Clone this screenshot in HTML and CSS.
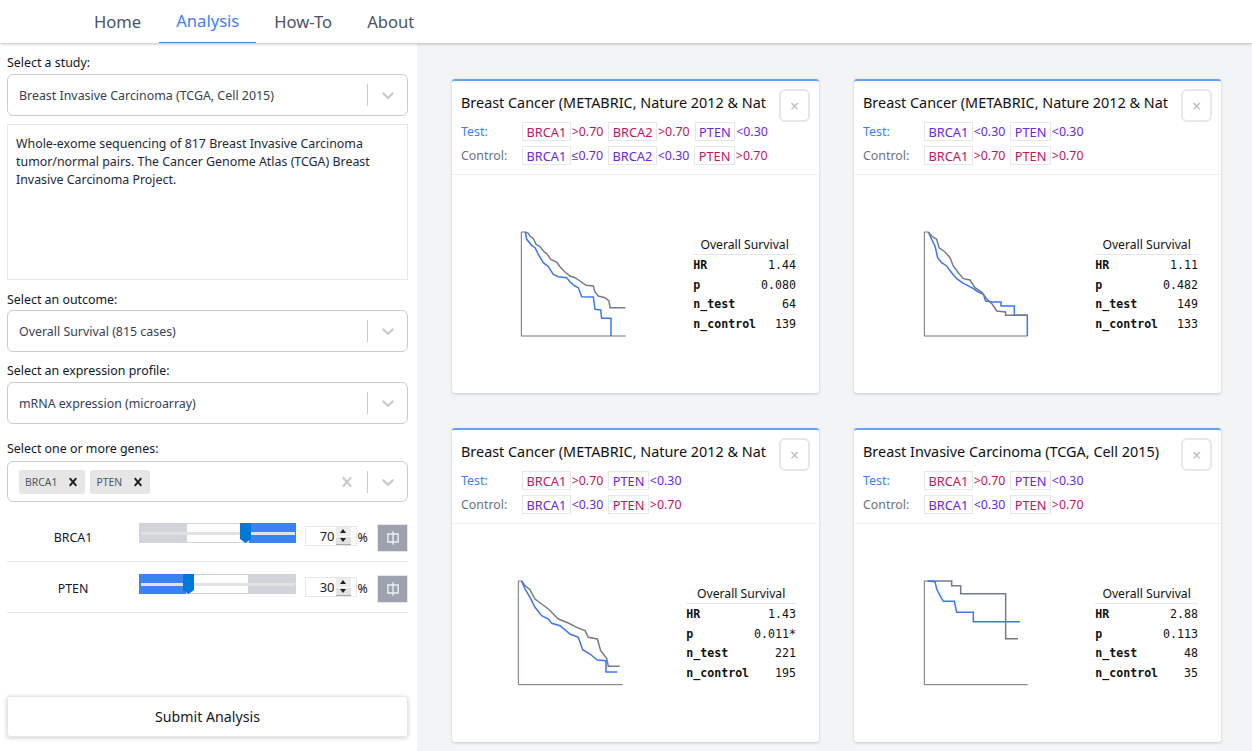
FILE: index.html
```html
<!DOCTYPE html>
<html lang="en">
<head>
  <meta charset="UTF-8" />
  <title>Survival Analysis</title>
  <link rel="stylesheet" href="styles.css">
</head>
<body>
  <svg class="defs" aria-hidden="true">
    <symbol id="chevron" viewBox="0 0 20 20"><path d="M4.516 7.548c0.436-0.446 1.043-0.481 1.576 0l3.908 3.747 3.908-3.747c0.533-0.481 1.141-0.446 1.574 0 0.436 0.445 0.408 1.197 0 1.615-0.406 0.418-4.695 4.502-4.695 4.502-0.217 0.223-0.502 0.335-0.787 0.335s-0.57-0.112-0.789-0.335c0 0-4.287-4.084-4.695-4.502s-0.436-1.17 0-1.615z"/></symbol>
    <symbol id="cross" viewBox="0 0 20 20"><path d="M14.348 14.849c-0.469 0.469-1.229 0.469-1.697 0l-2.651-3.030-2.651 3.029c-0.469 0.469-1.229 0.469-1.697 0-0.469-0.469-0.469-1.229 0-1.697l2.758-3.15-2.759-3.152c-0.469-0.469-0.469-1.228 0-1.697s1.228-0.469 1.697 0l2.652 3.031 2.651-3.031c0.469-0.469 1.228-0.469 1.697 0s0.469 1.229 0 1.697l-2.758 3.152 2.758 3.15c0.469 0.469 0.469 1.229 0 1.698z"/></symbol>
    <symbol id="split" viewBox="0 0 14 14"><path d="M7 1v12M7 3.500H2.500v7H7M7 3.500h4.500v7H7" fill="none" stroke="currentColor" stroke-width="1.200"/></symbol>
  </svg>

  <nav class="topnav">
    <a class="nav-link" href="#">Home</a>
    <a class="nav-link active" href="#">Analysis</a>
    <a class="nav-link" href="#">How-To</a>
    <a class="nav-link" href="#">About</a>
  </nav>

  <div class="page">
    <!-- Form lateral -->
    <aside class="sidebar">
      <div class="field-label label-study">Select a study:</div>
      <div class="select">
        <span class="select-value">Breast Invasive Carcinoma (TCGA, Cell 2015)</span>
        <span class="select-sep"></span>
        <svg class="chevron"><use href="#chevron"/></svg>
      </div>
      <div class="study-desc">Whole-exome sequencing of 817 Breast Invasive Carcinoma tumor/normal pairs. The Cancer Genome Atlas (TCGA) Breast Invasive Carcinoma Project.</div>

      <div class="field-label label-outcome">Select an outcome:</div>
      <div class="select">
        <span class="select-value">Overall Survival (815 cases)</span>
        <span class="select-sep"></span>
        <svg class="chevron"><use href="#chevron"/></svg>
      </div>

      <div class="field-label label-profile">Select an expression profile:</div>
      <div class="select">
        <span class="select-value">mRNA expression (microarray)</span>
        <span class="select-sep"></span>
        <svg class="chevron"><use href="#chevron"/></svg>
      </div>

      <div class="field-label label-genes">Select one or more genes:</div>
      <div class="select select-genes">
        <div class="select-value chips">
          <span class="chip">BRCA1<svg class="chip-x"><use href="#cross"/></svg></span>
          <span class="chip">PTEN<svg class="chip-x"><use href="#cross"/></svg></span>
        </div>
        <svg class="clear-x"><use href="#cross"/></svg>
        <span class="select-sep"></span>
        <svg class="chevron"><use href="#chevron"/></svg>
      </div>

      <div class="gene-rows">
        <div class="gene-row">
          <div class="gene-name">BRCA1</div>
          <div class="slider">
            <span class="seg seg-gray seg-48"></span>
            <span class="seg seg-white seg-62"></span>
            <span class="seg seg-blue seg-47"></span>
            <span class="slider-line"></span>
            <span class="thumb thumb-70"></span>
          </div>
          <div class="num-box">
            <span class="num-value">70</span>
            <span class="spin"><i class="up"></i><i class="down"></i></span>
          </div>
          <span class="pct">%</span>
          <button class="split-btn"><svg><use href="#split"/></svg></button>
        </div>
        <div class="gene-row">
          <div class="gene-name">PTEN</div>
          <div class="slider">
            <span class="seg seg-blue seg-47"></span>
            <span class="seg seg-white seg-62"></span>
            <span class="seg seg-gray seg-48"></span>
            <span class="slider-line"></span>
            <span class="thumb thumb-30"></span>
          </div>
          <div class="num-box">
            <span class="num-value">30</span>
            <span class="spin"><i class="up"></i><i class="down"></i></span>
          </div>
          <span class="pct">%</span>
          <button class="split-btn"><svg><use href="#split"/></svg></button>
        </div>
      </div>

      <button class="submit">Submit Analysis</button>
    </aside>

    <!-- Cards de resultado -->
    <main class="results">
      <section class="card">
        <header class="card-head">
          <div class="card-title-row">
            <h2 class="card-title">Breast Cancer (METABRIC, Nature 2012 &amp; Nat</h2>
            <button class="close">×</button>
          </div>
          <div class="cond">
            <span class="cond-label test">Test:</span>
            <span class="gene high"><b>BRCA1</b>&gt;0.70</span>
            <span class="gene high"><b>BRCA2</b>&gt;0.70</span>
            <span class="gene low"><b>PTEN</b>&lt;0.30</span>
          </div>
          <div class="cond">
            <span class="cond-label">Control:</span>
            <span class="gene low"><b>BRCA1</b>≤0.70</span>
            <span class="gene low"><b>BRCA2</b>&lt;0.30</span>
            <span class="gene high"><b>PTEN</b>&gt;0.70</span>
          </div>
        </header>
        <div class="card-body">
          <svg class="km" viewBox="30 15 330 318">
            <path class="axis" d="M46 18H34V330H347"/>
            <polyline class="ctrl" points="46,18 55,22 60,30 70,38 78,55 90,62 100,75 112,85 122,100 140,108 150,122 165,138 180,150 195,155 210,165 228,178 250,180 255,198 265,210 285,215 297,225 300,245 346,245"/>
            <polyline class="test-line" points="46,18 50,40 65,58 75,65 85,85 100,110 115,122 130,145 145,152 170,155 180,168 195,180 205,185 215,212 250,213 255,250 272,252 275,277 303,277 303,330"/>
          </svg>
          <table class="stats">
            <caption>Overall Survival</caption>
            <tr><th>HR</th><td>1.44</td></tr>
            <tr><th>p</th><td>0.080</td></tr>
            <tr><th>n_test</th><td>64</td></tr>
            <tr><th>n_control</th><td>139</td></tr>
          </table>
        </div>
      </section>

      <section class="card">
        <header class="card-head">
          <div class="card-title-row">
            <h2 class="card-title">Breast Cancer (METABRIC, Nature 2012 &amp; Nat</h2>
            <button class="close">×</button>
          </div>
          <div class="cond">
            <span class="cond-label test">Test:</span>
            <span class="gene low"><b>BRCA1</b>&lt;0.30</span>
            <span class="gene low"><b>PTEN</b>&lt;0.30</span>
          </div>
          <div class="cond">
            <span class="cond-label">Control:</span>
            <span class="gene high"><b>BRCA1</b>&gt;0.70</span>
            <span class="gene high"><b>PTEN</b>&gt;0.70</span>
          </div>
        </header>
        <div class="card-body">
          <svg class="km" viewBox="21 15 330 318">
            <path class="axis" d="M40 18H28V330H337"/>
            <polyline class="test-line" points="40,18 50,40 60,60 68,95 80,110 95,120 110,140 125,158 145,172 170,185 190,198 205,205 212,225 232,228 258,228 258,240 298,240 298,268 337,268 337,330"/>
            <polyline class="ctrl" points="40,18 50,30 65,40 72,65 90,78 105,95 115,120 130,140 145,158 165,162 180,185 200,198 215,218 232,235 245,255 272,258 272,268 337,268"/>
          </svg>
          <table class="stats">
            <caption>Overall Survival</caption>
            <tr><th>HR</th><td>1.11</td></tr>
            <tr><th>p</th><td>0.482</td></tr>
            <tr><th>n_test</th><td>149</td></tr>
            <tr><th>n_control</th><td>133</td></tr>
          </table>
        </div>
      </section>

      <section class="card">
        <header class="card-head">
          <div class="card-title-row">
            <h2 class="card-title">Breast Cancer (METABRIC, Nature 2012 &amp; Nat</h2>
            <button class="close">×</button>
          </div>
          <div class="cond">
            <span class="cond-label test">Test:</span>
            <span class="gene high"><b>BRCA1</b>&gt;0.70</span>
            <span class="gene low"><b>PTEN</b>&lt;0.30</span>
          </div>
          <div class="cond">
            <span class="cond-label">Control:</span>
            <span class="gene low"><b>BRCA1</b>&lt;0.30</span>
            <span class="gene high"><b>PTEN</b>&gt;0.70</span>
          </div>
        </header>
        <div class="card-body body-wide">
          <svg class="km" viewBox="21 13 330 318">
            <path class="axis" d="M35 16H25V327H338"/>
            <polyline class="ctrl" points="35,16 45,30 60,42 75,70 95,85 115,100 130,115 145,130 175,142 200,155 225,165 235,185 262,190 272,225 290,248 295,272 329,272"/>
            <polyline class="test-line" points="35,16 45,40 60,65 75,95 95,120 115,130 125,143 150,150 180,175 205,185 218,222 240,235 262,253 288,255 288,289 322,289"/>
          </svg>
          <table class="stats">
            <caption>Overall Survival</caption>
            <tr><th>HR</th><td>1.43</td></tr>
            <tr><th>p</th><td>0.011*</td></tr>
            <tr><th>n_test</th><td>221</td></tr>
            <tr><th>n_control</th><td>195</td></tr>
          </table>
        </div>
      </section>

      <section class="card">
        <header class="card-head">
          <div class="card-title-row">
            <h2 class="card-title">Breast Invasive Carcinoma (TCGA, Cell 2015)</h2>
            <button class="close">×</button>
          </div>
          <div class="cond">
            <span class="cond-label test">Test:</span>
            <span class="gene high"><b>BRCA1</b>&gt;0.70</span>
            <span class="gene low"><b>PTEN</b>&lt;0.30</span>
          </div>
          <div class="cond">
            <span class="cond-label">Control:</span>
            <span class="gene low"><b>BRCA1</b>&lt;0.30</span>
            <span class="gene high"><b>PTEN</b>&gt;0.70</span>
          </div>
        </header>
        <div class="card-body">
          <svg class="km" viewBox="21 13 330 318">
            <path class="axis" d="M38 16H28V327H338"/>
            <polyline class="ctrl" points="38,16 110,16 110,30 137,30 137,54 272,54 272,189 309,189"/>
            <polyline class="test-line" points="38,16 60,18 65,40 75,60 85,77 118,77 125,110 175,110 175,138 315,138"/>
          </svg>
          <table class="stats">
            <caption>Overall Survival</caption>
            <tr><th>HR</th><td>2.88</td></tr>
            <tr><th>p</th><td>0.113</td></tr>
            <tr><th>n_test</th><td>48</td></tr>
            <tr><th>n_control</th><td>35</td></tr>
          </table>
        </div>
      </section>
    </main>
  </div>
</body>
</html>
```

FILE: styles.css
```css
* {
  margin: 0;
  padding: 0;
  box-sizing: border-box;
}

body {
  height: 100vh;
  overflow: hidden;
  background: #f3f4f6;
  color: #111827;
  font-family: "Noto Sans", Arial, sans-serif;
  font-size: 12.4px;
}

.defs {
  display: none;
}

/* Navegacao */
.topnav {
  display: flex;
  height: 43px;
  padding-left: 77px;
  gap: 1px;
  background: #fff;
  box-shadow: 0 1px 3px rgba(0, 0, 0, 0.25);
  position: relative;
}

.nav-link {
  display: block;
  height: 43px;
  padding: 9px 17px 0;
  color: #4b5563;
  font-size: 16.6px;
  line-height: 26px;
  text-decoration: none;
}

.nav-link.active {
  color: #3b82f6;
  padding-top: 8px;
  border-bottom: 1px solid #3b82f6;
}

.page {
  display: flex;
  height: 708px;
}

/* Lateral */
.sidebar {
  width: 417px;
  flex: none;
  display: flex;
  flex-direction: column;
  padding: 11px 9px 14px 7px;
  background: #fff;
}

.field-label {
  height: 18px;
  line-height: 18px;
  margin-bottom: 3px;
}

.label-study {
  margin-bottom: 2px;
}

.label-outcome {
  margin-bottom: 1px;
}

.label-profile {
  line-height: 20px;
}

.label-genes {
  margin-top: 6px;
  margin-bottom: 4px;
  line-height: 20px;
}

.select {
  display: flex;
  align-items: center;
  height: 42px;
  flex: none;
  margin-bottom: 9px;
  border: 1px solid #ccc;
  border-radius: 6px;
  padding: 0 9px 0 11px;
  color: #374151;
}

.select-genes {
  height: 41px;
}

.select-value {
  flex: 1;
}

.select-sep {
  width: 1px;
  height: 22px;
  background: #ccc;
  margin-right: 10px;
}

.chevron {
  width: 20px;
  height: 20px;
  fill: #ccc;
}

.clear-x {
  width: 20px;
  height: 20px;
  fill: #ccc;
  margin-right: 10px;
}

.chips {
  display: flex;
  gap: 5px;
}

.chip {
  display: flex;
  align-items: center;
  justify-content: space-between;
  height: 24px;
  padding: 0 4px 0 6px;
  background: #e6e6e6;
  border-radius: 2px;
  font-size: 10.4px;
  color: #4b5563;
  gap: 8px;
}

.chip-x {
  width: 16px;
  height: 16px;
  fill: #222;
}

.study-desc {
  height: 156px;
  flex: none;
  margin: -1px 0 11px;
  padding: 10px 8px;
  border: 1px solid #e5e7eb;
  line-height: 18px;
  color: #1f2937;
}

.gene-row {
  display: flex;
  align-items: flex-start;
  height: 51px;
  border-bottom: 1px solid #e5e7eb;
}

.gene-name {
  width: 132px;
  flex: none;
  padding-top: 18px;
  text-align: center;
}

.slider {
  position: relative;
  display: flex;
  width: 157px;
  height: 20px;
  margin-top: 12px;
}

.seg {
  display: block;
  height: 20px;
}

.seg-48 { width: 48px; }
.seg-62 { width: 62px; }
.seg-47 { width: 47px; }

.seg-gray { background: #d1d5db; }
.seg-blue { background: #3b82f6; }
.seg-white {
  background: #fff;
  border-top: 1px solid #d1d5db;
  border-bottom: 1px solid #d1d5db;
}

.slider-line {
  position: absolute;
  left: 2px;
  right: 1px;
  top: 9px;
  height: 3px;
  background: #e2e2e0;
}

.thumb {
  position: absolute;
  top: 0;
  width: 11px;
  height: 20px;
  background: #0078d7;
  clip-path: polygon(0 0, 100% 0, 100% 80%, 50% 100%, 0 80%);
}

.thumb-70 { left: 101px; }
.thumb-30 { left: 44px; }

.num-box {
  display: flex;
  align-items: center;
  justify-content: flex-end;
  width: 52px;
  height: 20px;
  margin: 15px 0 0 9px;
  padding-right: 5px;
  border: 1px solid #e5e7eb;
  font-size: 13px;
  color: #222;
}

.spin {
  display: flex;
  flex-direction: column;
  width: 15px;
  height: 18px;
  margin-left: 1px;
}

.spin i {
  display: block;
  position: relative;
  height: 9px;
  background: #ececec;
}

.spin i.down {
  background: #e2e2e2;
  border-top: 1px solid #fff;
  border-bottom: 1px solid #aaa;
}

.spin i::after {
  content: "";
  position: absolute;
  left: 4px;
  top: 2px;
  border-left: 3.5px solid transparent;
  border-right: 3.5px solid transparent;
}

.spin i.up::after { border-bottom: 4px solid #222; }
.spin i.down::after { border-top: 4px solid #222; top: 1px; }

.pct {
  width: 21px;
  padding: 18px 0 0 1px;
  line-height: 18px;
}

.split-btn {
  display: flex;
  align-items: center;
  justify-content: center;
  width: 31px;
  height: 28px;
  margin-top: 13px;
  background: #9ca3af;
  border: 1px solid #e5e7eb;
  color: #eef0f3;
}

.split-btn svg {
  width: 16px;
  height: 16px;
}

.submit {
  height: 41px;
  margin-top: auto;
  border: 1px solid #e5e7eb;
  border-radius: 3px;
  background: #fff;
  box-shadow: 0 1px 4px rgba(0, 0, 0, 0.2);
  font: 14.2px "Noto Sans", Arial, sans-serif;
  color: #111827;
}

/* Resultados */
.results {
  flex: 1;
  display: grid;
  grid-template-columns: repeat(2, 367px);
  grid-auto-rows: 314px;
  gap: 35px;
  padding: 36px 0 0 35px;
}

.card {
  background: #fff;
  border-top: 2px solid #60a5fa;
  border-radius: 3px;
  box-shadow: 0 1px 3px rgba(0, 0, 0, 0.18);
}

.card-head {
  height: 94px;
  padding: 8px 9px 0;
  border-bottom: 1px solid #f1f1f1;
}

.card-title-row {
  display: flex;
  justify-content: space-between;
  height: 33px;
  margin-bottom: -3px;
}

.card-title {
  width: 306px;
  overflow: hidden;
  white-space: nowrap;
  font-size: 14.4px;
  font-weight: 400;
  line-height: 28px;
  color: #111;
}

.close {
  width: 31px;
  height: 33px;
  background: #fff;
  border: 2px solid #e5e7eb;
  border-radius: 6px;
  color: #bbb;
  font: 16px "Noto Sans", Arial, sans-serif;
}

.cond {
  display: flex;
  align-items: center;
  height: 24px;
  gap: 5px;
}

.cond-label {
  width: 56px;
  color: #6b7280;
}

.cond-label.test {
  color: #3b82f6;
}

.gene {
  display: flex;
  align-items: center;
  gap: 1px;
}

.gene b {
  display: block;
  height: 19px;
  padding: 0 3.4px;
  border: 1px solid #e5e7eb;
  font-size: 12.8px;
  font-weight: 400;
  line-height: 18px;
}

.gene.high { color: #be185d; }
.gene.low { color: #6d28d9; }

.card-body {
  display: flex;
  justify-content: space-between;
  padding: 56px 23px 0 68px;
}

.body-wide {
  padding-left: 65px;
}

.km {
  width: 110px;
  height: 106px;
  flex: none;
  fill: none;
  stroke-width: 4.5;
}

.axis {
  stroke: #6b7280;
  stroke-width: 3;
}

.ctrl {
  stroke: #757c88;
}

.test-line {
  stroke: #3b78ee;
}

.stats {
  align-self: flex-start;
  margin-top: 5px;
  border-collapse: collapse;
  font-family: "DejaVu Sans Mono", monospace;
  font-size: 11.6px;
  color: #111;
}

.stats caption {
  height: 19px;
  border-bottom: 1px solid #e5e7eb;
  font-family: "Noto Sans", Arial, sans-serif;
  font-size: 12.2px;
  line-height: 17px;
}

.stats th {
  height: 19.7px;
  padding: 0 5px 0 0;
  text-align: left;
}

.stats td {
  text-align: right;
  padding: 0;
}
```
